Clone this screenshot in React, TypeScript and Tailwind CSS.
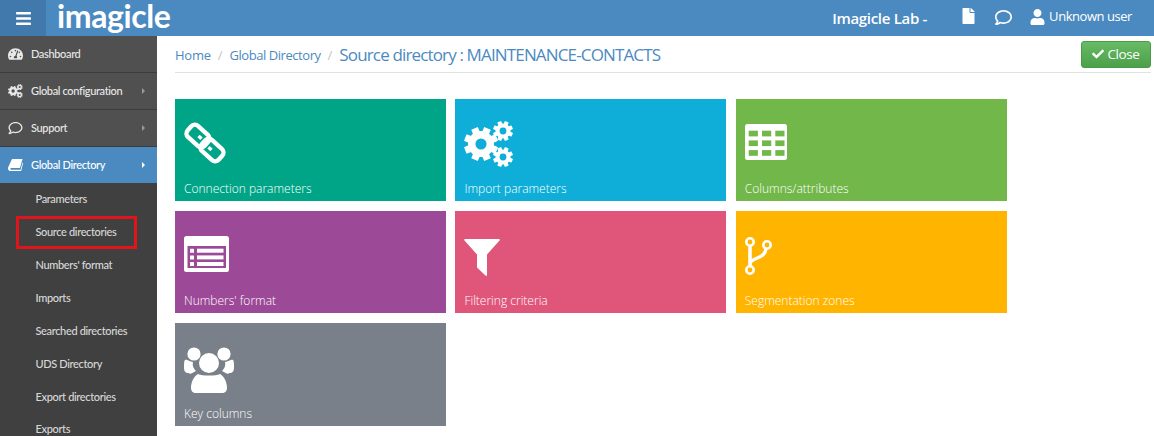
import React from 'react';
import { FaBars, FaCheck, FaFile, FaRegComment, FaTachometerAlt, FaUser } from 'react-icons/fa';

type IconProps = { className?: string };

const Gear = ({ cx, cy, r, hole }: { cx: number; cy: number; r: number; hole: number }) => {
  const bodyR = r * 0.76;
  const toothW = r * 0.42;
  return (
    <g>
      {[0, 45, 90, 135, 180, 225, 270, 315].map((a) => (
        <rect key={a} x={cx - toothW / 2} y={cy - r} width={toothW} height={r - bodyR + 2} rx={0.6} transform={`rotate(${a + 22.5} ${cx} ${cy})`} />
      ))}
      <circle cx={cx} cy={cy} r={(bodyR + hole) / 2} fill="none" stroke="currentColor" strokeWidth={bodyR - hole} />
    </g>
  );
};

const CogsIcon = ({ className }: IconProps) => (
  <svg viewBox="0 0 50 46" className={className} fill="currentColor">
    <Gear cx={17} cy={23} r={17} hole={5.6} />
    <Gear cx={39} cy={10} r={10} hole={3.4} />
    <Gear cx={39} cy={36} r={10} hole={3.4} />
  </svg>
);

const LinkIcon = ({ className }: IconProps) => (
  <svg viewBox="0 0 42 42" className={className} fill="none" stroke="currentColor" strokeWidth="4.4">
    <rect x="2.5" y="6.5" width="23" height="15" rx="5" transform="rotate(42 14 14)" />
    <rect x="16.5" y="20.5" width="23" height="15" rx="5" transform="rotate(42 28 28)" />
    <path d="M14.5 14L17.5 16.8M24.5 25.2L27.5 28" strokeWidth="3.4" />
  </svg>
);

const TableIcon = ({ className }: IconProps) => {
  const xs = [3.7, 17, 30.3];
  const ys = [6.7, 16.4, 26.1];
  return (
    <svg viewBox="0 0 42 36" className={className}>
      <rect width="42" height="36" rx="2.5" fill="white" />
      {ys.map((y) => xs.map((x) => <rect key={`${x}-${y}`} x={x} y={y} width="9.2" height="5.7" fill="#72b74a" />))}
    </svg>
  );
};

const ListIcon = ({ className }: IconProps) => (
  <svg viewBox="0 0 45 36" className={className}>
    <rect width="45" height="36" rx="2.5" fill="white" />
    <rect x="3.5" y="10" width="38.5" height="22" fill="#9c4a98" />
    {[12.7, 19.4, 26].map((y) => (
      <g key={y} fill="white">
        <rect x="6" y={y} width="4" height="4" rx="0.5" />
        <rect x="13" y={y} width="26.5" height="4" />
      </g>
    ))}
  </svg>
);

const FilterIcon = ({ className }: IconProps) => (
  <svg viewBox="0 0 36 37" className={className} fill="currentColor">
    <path d="M1 0H35C36 0 36 1 35.5 1.6L23 15.5V36.4C23 37 22 37 21.5 36.5L14 29.5C13.5 29 13 28.6 13 28V15.5L.5 1.6C0 1 0 0 1 0Z" />
  </svg>
);

const BranchIcon = ({ className }: IconProps) => (
  <svg viewBox="0 0 27 38" className={className} fill="none" stroke="currentColor">
    <circle cx="5" cy="5" r="3.7" strokeWidth="2.6" />
    <circle cx="5" cy="33" r="3.7" strokeWidth="2.6" />
    <circle cx="22" cy="8" r="3.7" strokeWidth="2.6" />
    <path d="M5 8.5V29.5" strokeWidth="3.6" />
    <path d="M5 26C8 20 20 22 21 11.5" strokeWidth="3.4" />
  </svg>
);

const PeopleIcon = ({ className }: IconProps) => (
  <svg viewBox="0 0 50 46" className={className} fill="currentColor">
    <circle cx="10" cy="7" r="6.6" />
    <circle cx="40" cy="7" r="6.6" />
    <path d="M1 13C3 12 4 14 9 15 8 19 10 22 12 24 8 26 6 28 5 26 1 26 0 24 0 20 0 17 0 14 1 13Z" />
    <path d="M49 13C47 12 46 14 41 15 42 19 40 22 38 24 42 26 44 28 45 26 49 26 50 24 50 20 50 17 50 14 49 13Z" />
    <circle cx="25" cy="16" r="10" />
    <path d="M14 27C18 29 32 29 36 27 41 30 43 36 43 41 43 44 41 46 38 46H12C9 46 7 44 7 41 7 36 9 30 14 27Z" />
  </svg>
);

const BookIcon = ({ className }: IconProps) => (
  <svg viewBox="0 0 15 12" className={className} fill="currentColor">
    <path d="M4 0H14.5L12 9H3.2C2 9 2 10.8 3.2 10.8H12.6L14.4 3.5 15 4.2 13.2 12H2.6C1 12 0 10.8 0 9.4 0 9 .1 8.6.3 8Z" />
  </svg>
);

const ChevRight = ({ active }: { active?: boolean }) => (
  <span className={`border-y-[3px] border-l-[3px] border-y-transparent ${active ? 'border-l-white' : 'border-l-[#9a9a9a]'}`} />
);

const topItems = [
  { label: 'Dashboard', icon: FaTachometerAlt, chev: false },
  { label: 'Global configuration', icon: CogsIcon, chev: true },
  { label: 'Support', icon: FaRegComment, chev: true },
];

const subItems = ['Parameters', 'Source directories', "Numbers' format", 'Imports', 'Searched directories', 'UDS Directory', 'Export directories', 'Exports'];

const tiles = [
  { label: 'Connection parameters', bg: 'bg-[#00a587]', icon: <LinkIcon className="w-[42px] h-[42px] mt-[23px]" /> },
  { label: 'Import parameters', bg: 'bg-[#0eaed8]', icon: <CogsIcon className="w-[50px] h-[46px] mt-[22px]" /> },
  { label: 'Columns/attributes', bg: 'bg-[#72b74a]', icon: <TableIcon className="w-[42px] h-[36px] mt-[25px]" /> },
  { label: "Numbers' format", bg: 'bg-[#9c4a98]', icon: <ListIcon className="w-[45px] h-[36px] mt-[25px]" /> },
  { label: 'Filtering criteria', bg: 'bg-[#e0567b]', icon: <FilterIcon className="w-[36px] h-[37px] mt-[28px]" /> },
  { label: 'Segmentation zones', bg: 'bg-[#ffb400]', icon: <BranchIcon className="w-[27px] h-[38px] mt-[26px]" /> },
  { label: 'Key columns', bg: 'bg-[#7a8089]', icon: <PeopleIcon className="w-[50px] h-[46px] mt-[24px]" /> },
];

export default function App() {
  return (
    <div className="h-[436px] w-[1154px] overflow-hidden bg-white font-['Open_Sans','Noto_Sans',sans-serif] flex flex-col">
      {/* Top bar */}
      <header className="h-[36px] shrink-0 bg-[#4b8ac1] text-white flex items-center">
        <div className="w-[46px] h-full bg-[#4179ac] flex items-center justify-center">
          <FaBars className="w-[17px] h-[17px]" />
        </div>
        <div className="ml-[11px] self-start text-[32px] leading-[32px] h-[32px] font-bold tracking-[-0.4px] font-['Lato',sans-serif]">imagicle</div>
        <div className="ml-auto flex items-center">
          <span className="text-[15px] font-semibold tracking-[-0.3px]">Imagicle Lab -</span>
          <FaFile className="ml-[35px] w-[13px] h-[16px] -mt-[4px]" />
          <FaRegComment className="ml-[19px] w-[19px] h-[17px] -mt-[1px]" />
          <FaUser className="ml-[17px] w-[15px] h-[16px] -mt-[2px]" />
          <span className="ml-[4px] mr-[22px] text-[13px] tracking-[-0.45px] -mt-[2px]">Unknown user</span>
        </div>
      </header>

      <div className="flex flex-1 min-h-0">
        {/* Sidebar */}
        <aside className="w-[157px] shrink-0 bg-[#404040] text-[11px] tracking-[-0.35px] font-['Lato',sans-serif] font-medium text-[#e8e8e8] overflow-hidden">
          {topItems.map((item) => (
            <div key={item.label} className="h-[37px] bg-[#505050] border-b border-[#3c3c3c] flex items-center pl-[8px] pr-[12px]">
              <item.icon className="w-[15px] h-[14px] shrink-0" />
              <span className="ml-[8px]">{item.label}</span>
              {item.chev && <span className="ml-auto flex"><ChevRight /></span>}
            </div>
          ))}
          <div className="h-[36px] bg-[#4b8ac1] text-white flex items-center pl-[8px] pr-[12px]">
            <BookIcon className="w-[15px] h-[12px] shrink-0" />
            <span className="ml-[8px]">Global Directory</span>
            <span className="ml-auto flex"><ChevRight active /></span>
          </div>
          {subItems.map((label) => (
            <div key={label} className="relative h-[32.9px] flex items-center pl-[35.5px] text-[#d8d8d8]">
              {label}
              {label === 'Source directories' && (
                <span className="absolute left-[16px] top-0 w-[121px] h-[33px] border-[3px] border-[#e0151b]" />
              )}
            </div>
          ))}
        </aside>

        {/* Content */}
        <main className="flex-1 min-w-0 pl-[18px] pr-[3px]">
          <div className="h-[37px] border-b border-[#e1e1e1] flex items-center pt-[4px]">
            <span className="text-[#4b8ac1] text-[13px] tracking-[-0.25px]">Home</span>
            <span className="text-[#c4c4c4] text-[13px] mx-[7px]">/</span>
            <span className="text-[#4b8ac1] text-[13px] tracking-[-0.45px]">Global Directory</span>
            <span className="text-[#c4c4c4] text-[13px] mx-[7px]">/</span>
            <span className="text-[#4b8ac1] text-[17px] tracking-[-0.85px] -mt-[2px]">Source directory : MAINTENANCE-CONTACTS</span>
            <button className="ml-auto h-[27px] w-[70px] -mt-[4px] rounded-[3px] border border-[#4a9a48] bg-gradient-to-b from-[#66bb64] to-[#4ba049] text-white text-[13.5px] tracking-[-0.4px] flex items-center justify-center gap-[3px]">
              <FaCheck className="w-[12px] h-[12px]" />
              Close
            </button>
          </div>

          <div className="mt-[26px] grid grid-cols-[repeat(3,271px)] grid-rows-[102px_102px_103px] gap-x-[9.4px] gap-y-[10px]">
            {tiles.map((tile) => (
              <div key={tile.label} className={`${tile.bg} text-white pl-[9px] pb-[3px] flex flex-col justify-between`}>
                <div className="flex items-start">{tile.icon}</div>
                <div className="text-[12px] leading-[18px] font-light">{tile.label}</div>
              </div>
            ))}
          </div>
        </main>
      </div>
    </div>
  );
}
